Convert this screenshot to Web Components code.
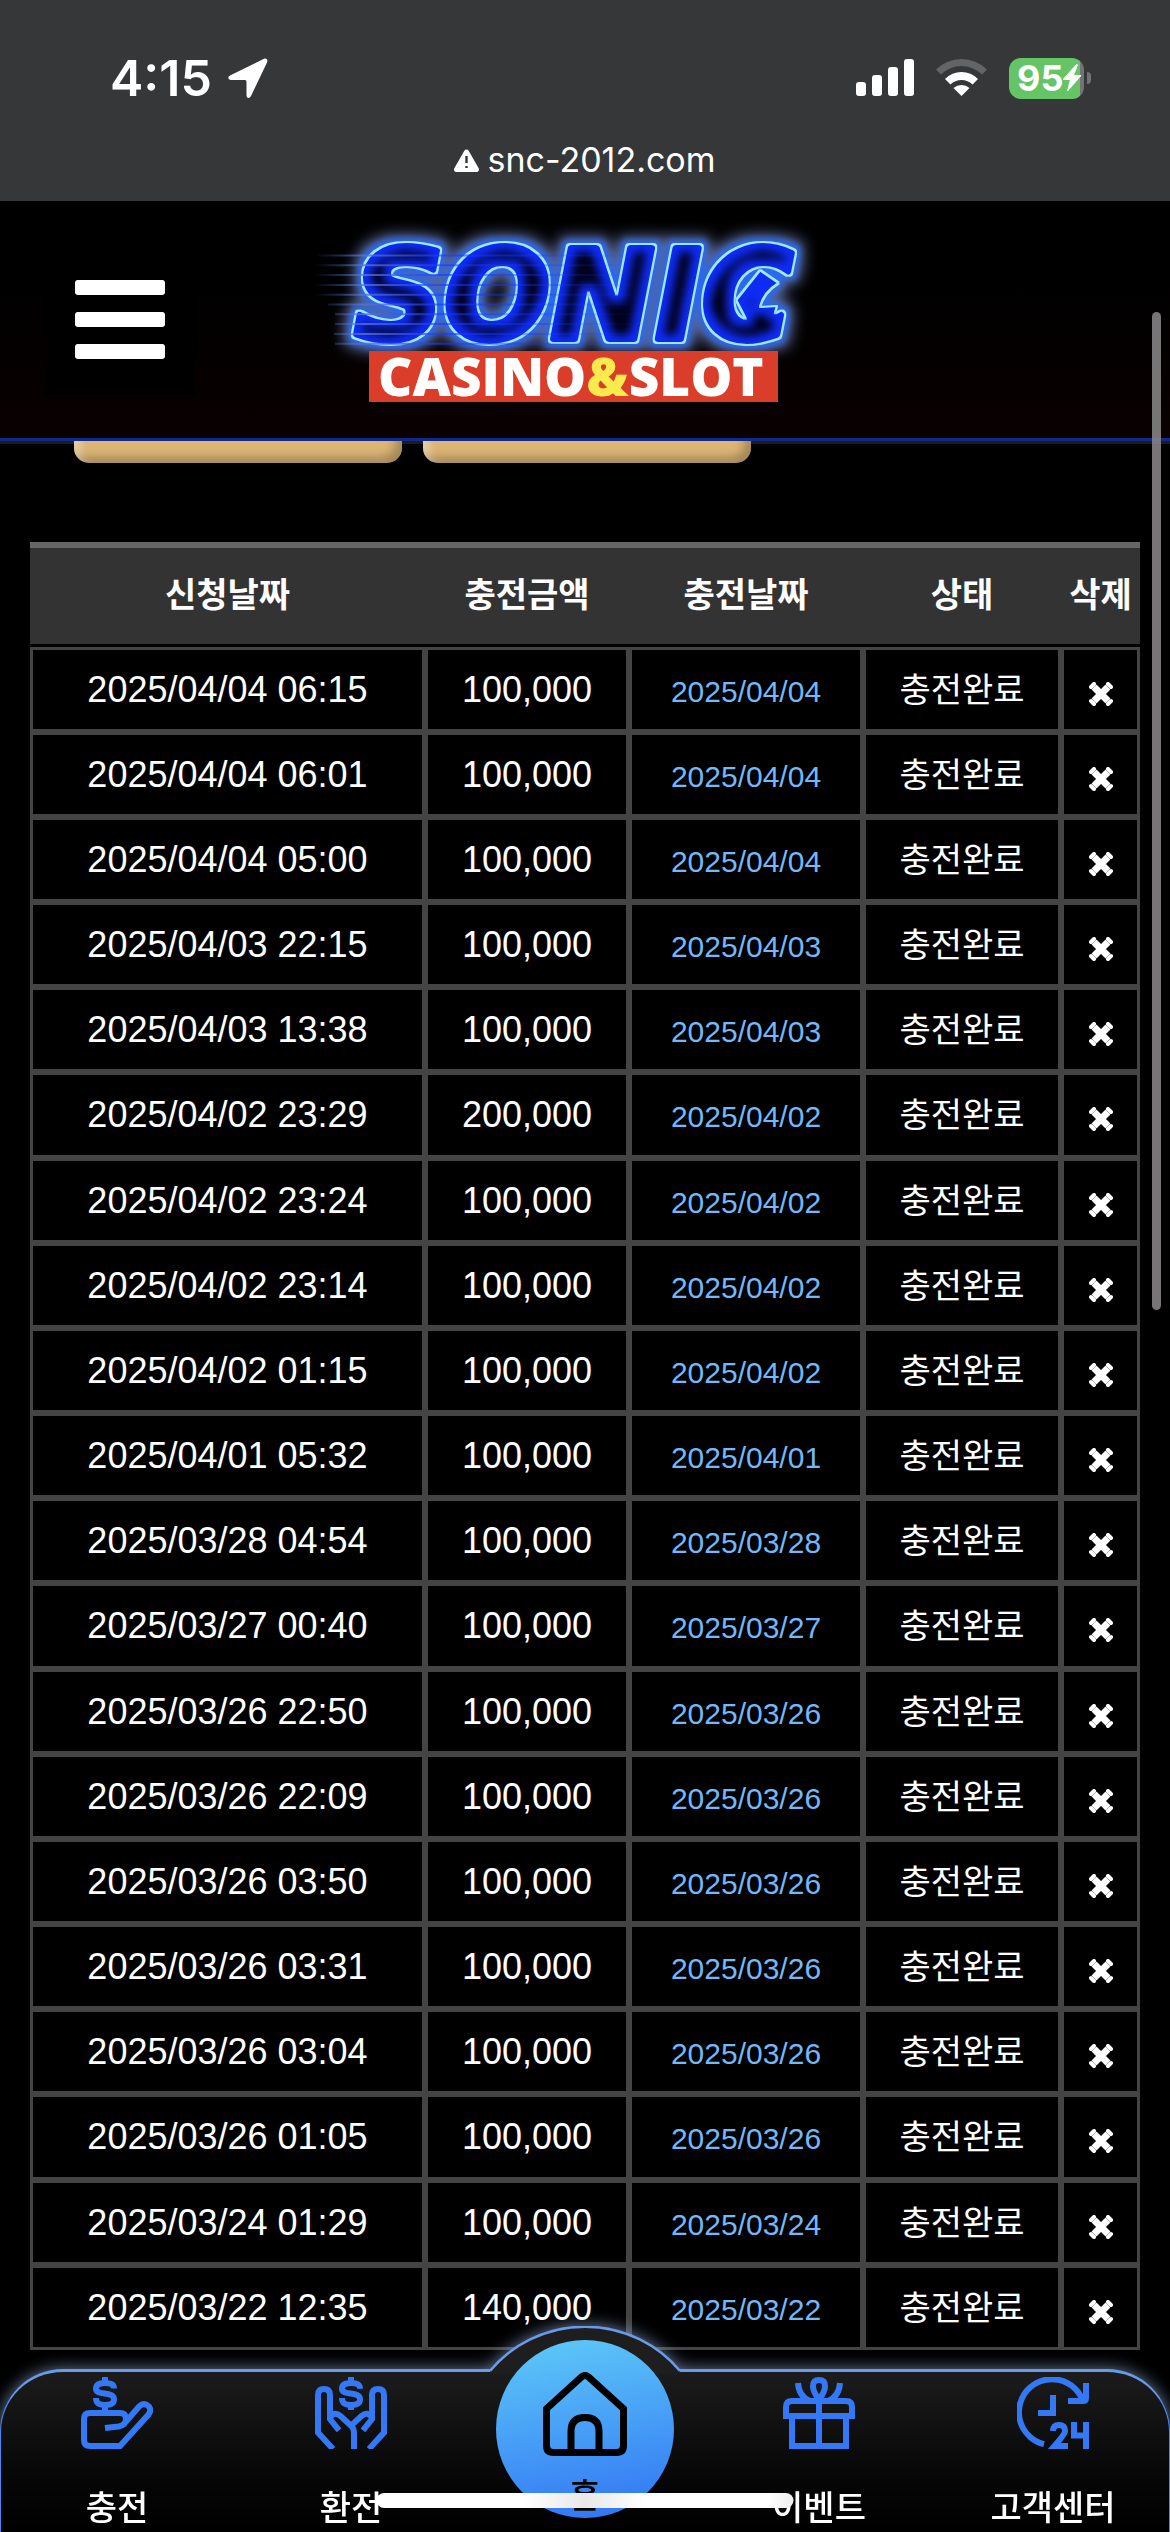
<!DOCTYPE html>
<html lang="ko">
<head>
<meta charset="utf-8">
<meta name="viewport" content="width=device-width, initial-scale=1">
<title>snc-2012.com</title>
<style>
    html, body {
        margin: 0;
        background: #000;
        color: #fff;
        font-family: "Liberation Sans", "Noto Sans CJK KR", sans-serif;
        overflow: hidden;
    }
    body {
        min-height: 100vh;
    }
</style>
</head>
<body>
<status-bar time="4:15" battery="95">snc-2012.com</status-bar>
<site-header><sonic-logo></sonic-logo></site-header>
<charge-tabs></charge-tabs>
<charge-table></charge-table>
<page-scroll></page-scroll>
<bottom-nav>
    <nav-item icon="charge">충전</nav-item>
    <nav-item icon="exchange">환전</nav-item>
    <nav-item icon="home" main>홈</nav-item>
    <nav-item icon="event">이벤트</nav-item>
    <nav-item icon="support">고객센터</nav-item>
</bottom-nav>
<home-indicator></home-indicator>

<script>
class StatusBar extends HTMLElement {
    constructor() {
        super();
        this.attachShadow({ mode: 'open' });
    }

    connectedCallback() {
        this.shadowRoot.innerHTML = `
            <style>
                :host {
                    display: block;
                    height: 201px;
                    background: #363739;
                    font-family: Inter, "Liberation Sans", sans-serif;
                }
                .top {
                    display: flex;
                    justify-content: space-between;
                    align-items: center;
                    padding: 48px 79px 0 110px;
                    height: 60px;
                }
                .left, .right {
                    display: flex;
                    align-items: center;
                }
                .left {
                    gap: 16px;
                    font-size: 50px;
                    line-height: 60px;
                    font-weight: 600;
                }
                .right {
                    gap: 22px;
                }
                .battery {
                    display: flex;
                    align-items: center;
                    gap: 3px;
                }
                .cell {
                    display: flex;
                    align-items: center;
                    box-sizing: border-box;
                    width: 75px;
                    height: 41px;
                    padding-left: 8px;
                    border-radius: 12px;
                    background: linear-gradient(90deg, #65c466 71px, #727376 71px);
                    font-size: 36px;
                    line-height: 41px;
                    font-weight: 700;
                }
                .nub {
                    width: 4px;
                    height: 12px;
                    border-radius: 0 4px 4px 0;
                    background: #727376;
                }
                .url {
                    display: flex;
                    justify-content: center;
                    align-items: center;
                    gap: 8px;
                    padding-top: 30px;
                    font-size: 34px;
                    line-height: 44px;
                }
                svg {
                    display: block;
                }
            </style>
            <div class="top">
                <div class="left">
                    <span>${this.getAttribute('time')}</span>
                    <svg width="40" height="40" viewBox="0 0 40 40" fill="#fff"><path d="M36 .8 2 17.500C-.8 19 .2 22 3 22H17Q18.500 22 18.500 23.500V37C18.500 40.500 21.500 41 23 38L39 4.500C40.200 1.800 38.500-.3 36 .8Z"/></svg>
                </div>
                <div class="right">
                    <svg width="58" height="38" viewBox="0 0 58 38" fill="#fff">
                        <rect y="23" width="10" height="14" rx="3"/>
                        <rect x="16" y="16" width="10" height="21" rx="3"/>
                        <rect x="32" y="8" width="10" height="29" rx="3"/>
                        <rect x="48" width="10" height="37" rx="3"/>
                    </svg>
                    <svg width="51" height="38" viewBox="0 0 51 38">
                        <path d="M0 10.500Q11 0 25.500 0T51 10.500L46 15.500Q37 7 25.500 7T5 15.500Z" fill="#636466"/>
                        <path d="M9 20Q16 13 25.500 13T42 20L36.500 25.500Q32 21 25.500 21T14.500 25.500Z" fill="#fff"/>
                        <path d="M17.500 29Q21 26 25.500 26T33.500 29L25.500 37Z" fill="#fff"/>
                    </svg>
                    <div class="battery">
                        <div class="cell">
                            <span>${this.getAttribute('battery')}</span>
                            <svg width="18" height="28" viewBox="0 0 18 28" fill="#fff"><path d="M13.500.5 0 15.500H7.500L4.500 27 18 11.500H10.500L14.500.8Z" stroke="#fff" stroke-linejoin="round"/></svg>
                        </div>
                        <div class="nub"></div>
                    </div>
                </div>
            </div>
            <div class="url">
                <svg width="25" height="23" viewBox="0 0 25 23"><path d="M12.500 3 22.500 20.500H2.500Z" fill="#fff" stroke="#fff" stroke-width="5" stroke-linejoin="round"/><path d="M12.500 7V14M12.500 17V19" stroke="#363739" stroke-width="2.400"/></svg>
                <slot></slot>
            </div>
        `;
    }
}
customElements.define("status-bar", StatusBar);


class SonicLogo extends HTMLElement {
    constructor() {
        super();
        this.attachShadow({ mode: 'open' });
    }

    connectedCallback() {
        // start x of every speed line behind the name
        const lines = [8, 6, 6, 6, 6, 18, 25, 25, 24, 25];
        this.shadowRoot.innerHTML = `
            <style>
                :host {
                    display: block;
                }
                svg {
                    display: block;
                }
                .name {
                    font: italic 700 125px "DejaVu Sans", sans-serif;
                }
                .sub {
                    font: 800 53px "Open Sans", sans-serif;
                }
            </style>
            <svg width="550" height="200" viewBox="0 0 550 200">
                <defs>
                    <linearGradient id="speed" gradientUnits="userSpaceOnUse" x1="5" x2="330" y1="0" y2="0">
                        <stop offset="0" stop-color="#3c62c8" stop-opacity="0"/>
                        <stop offset=".15" stop-color="#5a74c8" stop-opacity=".8"/>
                        <stop offset=".4" stop-color="#1c35ff" stop-opacity=".6"/>
                        <stop offset="1" stop-color="#1c35ff" stop-opacity="0"/>
                    </linearGradient>
                    <filter id="neon" filterUnits="userSpaceOnUse" x="0" y="-10" width="550" height="170" color-interpolation-filters="sRGB">
                        <feMorphology in="SourceAlpha" operator="dilate" radius="8" result="wide"/>
                        <feGaussianBlur in="wide" stdDeviation="7" result="haze"/>
                        <feFlood flood-color="#7486c4" flood-opacity=".75"/>
                        <feComposite in2="haze" operator="in" result="glow"/>
                        <feMorphology in="SourceAlpha" operator="dilate" radius="4" result="mid"/>
                        <feGaussianBlur in="mid" stdDeviation="3" result="midSoft"/>
                        <feFlood flood-color="#2b68f0"/>
                        <feComposite in2="midSoft" operator="in" result="halo"/>
                        <feMorphology in="SourceAlpha" operator="dilate" radius="1" result="edge"/>
                        <feFlood flood-color="#9feaff"/>
                        <feComposite in2="edge" operator="in" result="outline"/>
                        <feMorphology in="SourceAlpha" operator="erode" radius="1" result="inside"/>
                        <feFlood flood-color="#0f2cf5"/>
                        <feComposite in2="inside" operator="in" result="body"/>
                        <feMorphology in="SourceAlpha" operator="erode" radius="8" result="thin"/>
                        <feGaussianBlur in="thin" stdDeviation="4" result="inner"/>
                        <feFlood flood-color="#01011c"/>
                        <feComposite in2="inner" operator="in" result="dark"/>
                        <feMerge>
                            <feMergeNode in="glow"/>
                            <feMergeNode in="halo"/>
                            <feMergeNode in="outline"/>
                            <feMergeNode in="body"/>
                            <feMergeNode in="dark"/>
                        </feMerge>
                    </filter>
                </defs>
                <g class="name" filter="url(#neon)" stroke-linejoin="round">
                    <text x="44" y="119" fill="#0f2cf5" stroke="#0f2cf5" stroke-width="8">SONIC</text>
                    <path d="M450 50 469 63Q454 72 450 87L467 86 461 107H440L426 80Z"/>
                </g>
                <g stroke="url(#speed)" stroke-width="2">
                    ${lines.map((x, i) => `<path d="M${x} ${35.5 + i * 9.8}H330"/>`).join('')}
                </g>
                <path d="M59 131H468V182H59Z" fill="#db3d2b"/>
                <text class="sub" x="68" y="176" fill="#fff">CASINO<tspan fill="#fbea4d">&amp;</tspan>SLOT</text>
            </svg>
        `;
    }
}
customElements.define("sonic-logo", SonicLogo);


class SiteHeader extends HTMLElement {
    constructor() {
        super();
        this.attachShadow({ mode: 'open' });
    }

    connectedCallback() {
        this.shadowRoot.innerHTML = `
            <style>
                :host {
                    display: grid;
                    grid-template-columns: 1fr auto 1fr;
                    align-items: center;
                    position: relative;
                    z-index: 2;
                    height: 237px;
                    background: linear-gradient(#000 30%, #0a0000);
                    border-bottom: 3px solid #0f2a8c;
                }
                button {
                    display: flex;
                    flex-direction: column;
                    justify-content: center;
                    align-items: center;
                    gap: 17px;
                    width: 150px;
                    height: 150px;
                    margin-left: 45px;
                    padding: 0;
                    border: 0;
                    background: #000;
                    cursor: pointer;
                }
                i {
                    width: 90px;
                    height: 15px;
                    border-radius: 3px;
                    background: #fff;
                }
            </style>
            <button aria-label="메뉴"><i></i><i></i><i></i></button>
            <slot></slot>
        `;
    }
}
customElements.define("site-header", SiteHeader);


class ChargeTabs extends HTMLElement {
    constructor() {
        super();
        this.attachShadow({ mode: 'open' });
    }

    connectedCallback() {
        this.shadowRoot.innerHTML = `
            <style>
                :host {
                    display: flex;
                    gap: 21px;
                    padding: 0 74px;
                    border-top: 3px solid #1c1c1c;
                }
                button {
                    width: 328px;
                    height: 72px;
                    margin-top: -53px;
                    border: 0;
                    border-radius: 15px;
                    background: #dcb575;
                    box-shadow: inset 6px 6px 10px rgba(255, 255, 255, .4), inset -6px -6px 10px rgba(0, 0, 0, .25);
                    cursor: pointer;
                }
            </style>
            <button aria-label="충전신청"></button>
            <button aria-label="충전내역"></button>
        `;
    }
}
customElements.define("charge-tabs", ChargeTabs);


class ChargeTable extends HTMLElement {
    constructor() {
        super();
        this.attachShadow({ mode: 'open' });
        this.rows = [
            ['2025/04/04 06:15', '100,000'],
            ['2025/04/04 06:01', '100,000'],
            ['2025/04/04 05:00', '100,000'],
            ['2025/04/03 22:15', '100,000'],
            ['2025/04/03 13:38', '100,000'],
            ['2025/04/02 23:29', '200,000'],
            ['2025/04/02 23:24', '100,000'],
            ['2025/04/02 23:14', '100,000'],
            ['2025/04/02 01:15', '100,000'],
            ['2025/04/01 05:32', '100,000'],
            ['2025/03/28 04:54', '100,000'],
            ['2025/03/27 00:40', '100,000'],
            ['2025/03/26 22:50', '100,000'],
            ['2025/03/26 22:09', '100,000'],
            ['2025/03/26 03:50', '100,000'],
            ['2025/03/26 03:31', '100,000'],
            ['2025/03/26 03:04', '100,000'],
            ['2025/03/26 01:05', '100,000'],
            ['2025/03/24 01:29', '100,000'],
            ['2025/03/22 12:35', '140,000']
        ];
    }

    row([date, amount]) {
        return `
            <tr>
                <td>${date}</td>
                <td>${amount}</td>
                <td class="day">${date.split(' ')[0]}</td>
                <td class="state">충전완료</td>
                <td class="del"><button aria-label="삭제"><svg width="24" height="24" viewBox="0 0 24 24"><path d="M5 5 19 19M19 5 5 19" stroke="#fff" stroke-width="7"/><path d="M5 2 2 5M19 2 22 5M22 19 19 22M2 19 5 22" stroke="#fff" stroke-width="4" stroke-linecap="round"/></svg></button></td>
            </tr>`;
    }

    connectedCallback() {
        this.shadowRoot.innerHTML = `
            <style>
                :host {
                    display: block;
                    padding: 79px 30px 180px;
                }
                table {
                    width: 100%;
                    table-layout: fixed;
                    border-collapse: separate;
                    border-spacing: 0;
                    font-size: 36px;
                    line-height: 40px;
                    text-align: center;
                }
                .c2 { width: 204px; }
                .c3 { width: 234px; }
                .c4 { width: 198px; }
                .c5 { width: 79px; }
                th, td {
                    box-sizing: border-box;
                    padding: 0;
                    white-space: nowrap;
                }
                th {
                    height: 105px;
                    padding-bottom: 2px;
                    background: #333;
                    border-top: 6px solid #666;
                    border-bottom: 3px solid #000;
                    font-size: 34px;
                    font-weight: 700;
                }
                td {
                    height: 85px;
                    padding-top: 20px;
                    border: 3px solid #444;
                    vertical-align: baseline;
                }
                tr:nth-child(6n) td {
                    height: 86px;
                }
                .day {
                    color: #72b8fa;
                    font-size: 30px;
                }
                .state {
                    font-size: 34px;
                }
                .del {
                    padding-top: 8px;
                    vertical-align: middle;
                }
                .del button {
                    display: block;
                    margin: 0 auto;
                    padding: 0;
                    border: 0;
                    background: none;
                    cursor: pointer;
                }
                svg {
                    display: block;
                }
            </style>
            <table>
                <colgroup><col><col class="c2"><col class="c3"><col class="c4"><col class="c5"></colgroup>
                <thead>
                    <tr><th>신청날짜</th><th>충전금액</th><th>충전날짜</th><th>상태</th><th>삭제</th></tr>
                </thead>
                <tbody>${this.rows.map(r => this.row(r)).join('')}</tbody>
            </table>
        `;
    }
}
customElements.define("charge-table", ChargeTable);


class PageScroll extends HTMLElement {
    constructor() {
        super();
        this.attachShadow({ mode: 'open' });
    }

    connectedCallback() {
        this.shadowRoot.innerHTML = `
            <style>
                :host {
                    display: block;
                    position: fixed;
                    z-index: 3;
                    top: 312px;
                    right: 9px;
                    width: 9px;
                    height: 998px;
                    border-radius: 5px;
                    background: rgba(140, 138, 138, .85);
                }
            </style>
        `;
    }
}
customElements.define("page-scroll", PageScroll);


const icons = {
    charge: `
        <path d="M11 3.800C11 2.500 10 2 8 2 6 2 5 2.600 5 3.900 5 6.500 11 4.500 11 7.400 11 8.800 10 9.300 8 9.300 6 9.300 5 8.800 5 7M8 0V2M8 9V12"/>
        <path d="M8 17 12.500 16.500Q15 16 15 14 15 12 13 12H3Q1 12 1 14V21Q1 23 3 23H13L22.500 12.500Q23.600 11 22.600 9.800 21 8.300 19.500 9.700L15 14.800"/>`,
    exchange: `
        <path d="M15 3.900C15 2.500 14 2 12 2 10 2 9 2.600 9 3.900 9 6.500 15 4.500 15 7.400 15 8.800 14 9.300 12 9.300 10 9.300 9 8.800 9 7M12 0V2M12 9V11"/>
        <path d="M6 24 1 18.500V6Q1 4 3 4T5 6V14L8 17.800M5 13.500Q6.500 11.300 8.500 13L12 16.200Q13 17 13 19V24M18 24 23 18.500V6Q23 4 21 4T19 6V14L16 17.800M19 13.500Q17.500 11.300 15.500 13L12 16.200"/>`,
    home: `
        <path d="M1 10.500 11 1.400Q12 .600 13 1.400L23 10.500V21Q23 23 21 23H3Q1 23 1 21ZM8 23V17Q8 13 12 13T16 17V23"/>`,
    event: `
        <path d="M3 13V23H21V13M12 8V23M1 14V10Q1 8 3 8H21Q23 8 23 10V14M1 13H23M12 7.500Q10 5 10 3 10 1 12 1T14 3Q14 5 12 7.500ZM5 2Q5.300 6.500 9 8M19 2Q18.700 6.500 15 8"/>`,
    support: `
        <path d="M9 22.400A11 11 0 1 1 22 8M17 8H22Q23 8 23 7V2M12 6V12H7"/>
        <path d="M12 18Q12 16 14 16T16 18Q16 19 12.500 23H17M19 15V19.500H23M23 15V24" />`
};

class NavItem extends HTMLElement {
    constructor() {
        super();
        this.attachShadow({ mode: 'open' });
    }

    connectedCallback() {
        this.shadowRoot.innerHTML = `
            <style>
                :host {
                    display: block;
                    position: relative;
                    flex: 1 1 0;
                }
                a {
                    display: flex;
                    flex-direction: column;
                    align-items: center;
                    gap: 35px;
                    padding-top: 8px;
                    color: #fff;
                    font-size: 34px;
                    line-height: 48px;
                    font-weight: 500;
                    text-decoration: none;
                    white-space: nowrap;
                }
                svg {
                    display: block;
                    width: 72px;
                    height: 72px;
                    fill: none;
                    stroke: #3478f6;
                    stroke-width: 2;
                }
                :host([main]) a {
                    box-sizing: border-box;
                    width: 178px;
                    height: 178px;
                    margin: -29px auto 0;
                    padding-top: 32px;
                    gap: 16px;
                    border-radius: 50%;
                    background: linear-gradient(170deg, #5ecbf8, #3072f4);
                    color: #000;
                }
                :host([main]) svg {
                    width: 84px;
                    height: 84px;
                    flex: none;
                    stroke: #000;
                }
            </style>
            <a href="#">
                <svg viewBox="0 0 24 24" aria-hidden="true">${icons[this.getAttribute('icon')]}</svg>
                <span><slot></slot></span>
            </a>
        `;
    }
}
customElements.define("nav-item", NavItem);


class BottomNav extends HTMLElement {
    constructor() {
        super();
        this.attachShadow({ mode: 'open' });
    }

    connectedCallback() {
        this.shadowRoot.innerHTML = `
            <style>
                :host {
                    display: block;
                    position: fixed;
                    z-index: 4;
                    left: 0;
                    right: 0;
                    bottom: 0;
                    height: 163px;
                }
                .bg {
                    position: absolute;
                    inset: 0;
                    filter: drop-shadow(0 0 8px rgba(150, 180, 225, .7));
                }
                .bar {
                    box-sizing: border-box;
                    height: 100%;
                    border: 1px solid #4a86f2;
                    border-top: 3px solid #6a9aea;
                    border-bottom: 0;
                    border-radius: 63px 63px 0 0;
                    background: linear-gradient(#1c1c1c, #080808 60%, #000);
                }
                .bump {
                    position: absolute;
                    left: 50%;
                    top: -43px;
                    transform: translateX(-50%);
                }
                nav {
                    display: flex;
                    position: relative;
                }
            </style>
            <div class="bg">
                <div class="bar"></div>
                <svg class="bump" width="194" height="50" viewBox="0 0 194 50">
                    <path d="M2 45A124 124 0 0 1 192 45V48H2Z" fill="#1e1e1e"/>
                    <path d="M2 45A124 124 0 0 1 192 45" fill="none" stroke="#6a9aea" stroke-width="2.500"/>
                </svg>
            </div>
            <nav><slot></slot></nav>
        `;
    }
}
customElements.define("bottom-nav", BottomNav);


class HomeIndicator extends HTMLElement {
    constructor() {
        super();
        this.attachShadow({ mode: 'open' });
    }

    connectedCallback() {
        this.shadowRoot.innerHTML = `
            <style>
                :host {
                    display: block;
                    position: fixed;
                    z-index: 5;
                    left: 50%;
                    bottom: 24px;
                    width: 417px;
                    height: 15px;
                    transform: translateX(-50%);
                    border-radius: 8px;
                    background: linear-gradient(90deg, #fff 35%, #e8e8e8 50%, #fff 65%, #fff 94%, #eee);
                }
            </style>
        `;
    }
}
customElements.define("home-indicator", HomeIndicator);
</script>
</body>
</html>
